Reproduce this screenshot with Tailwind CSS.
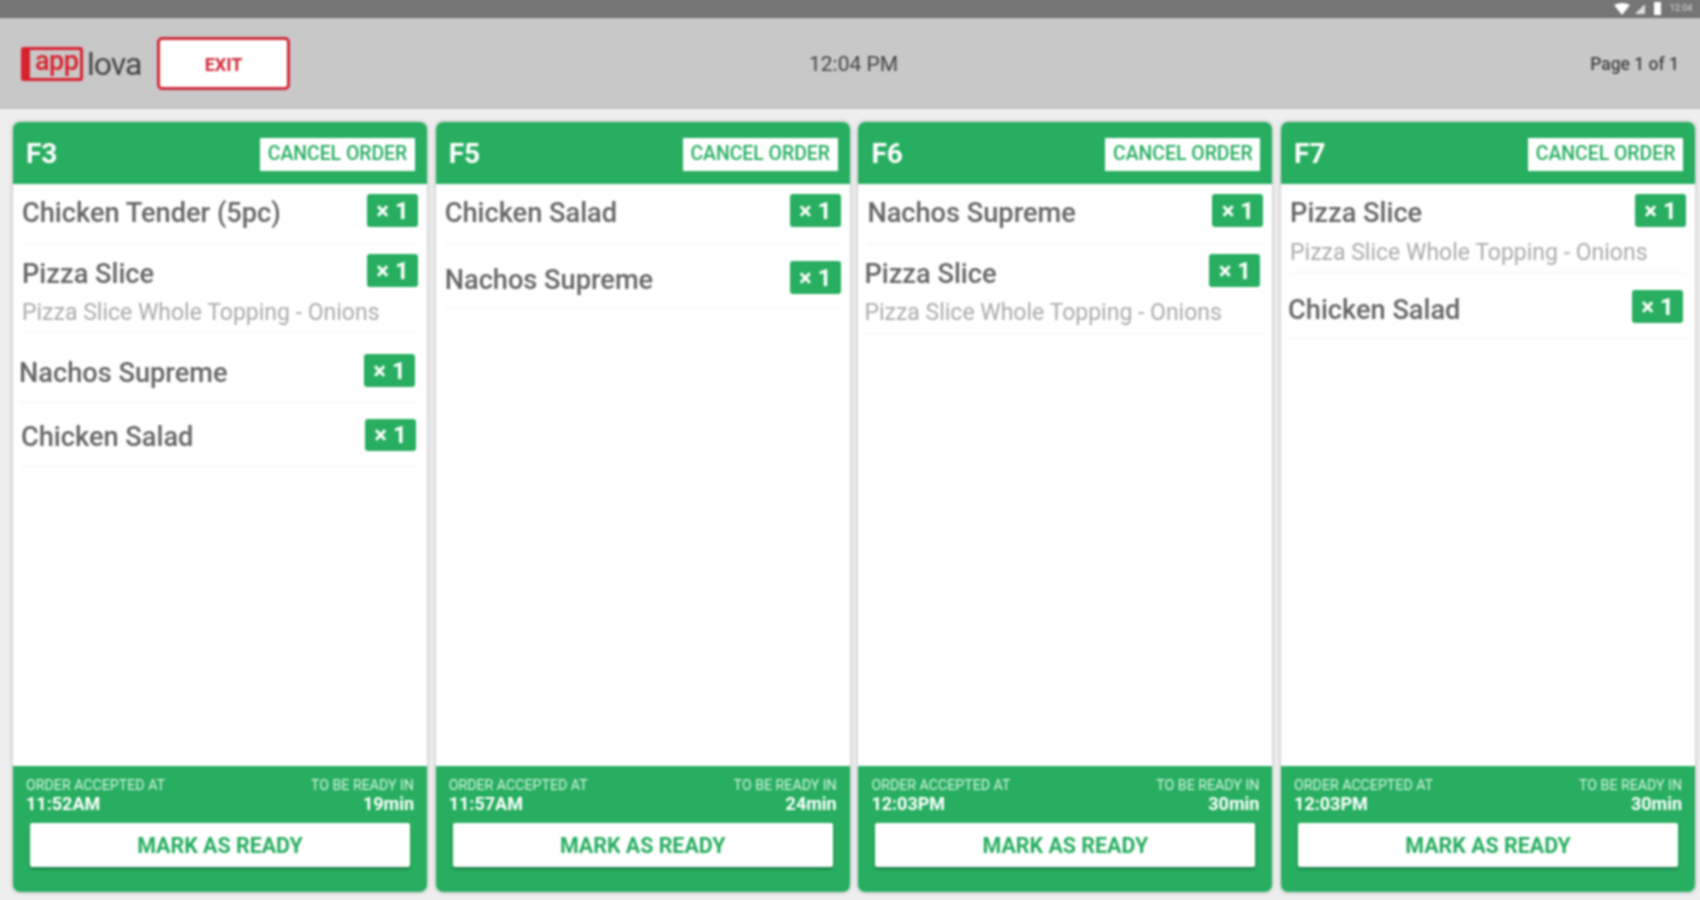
<!DOCTYPE html>
<html lang="en">
<head>
  <meta charset="UTF-8">
  <meta name="viewport" content="width=device-width, initial-scale=1.0">
  <title>Applova kitchen orders</title>
  <script src="https://cdn.jsdelivr.net/npm/@tailwindcss/browser@4"></script>
</head>
<body class="bg-[#eeeeee] h-[900px] w-[1700px] overflow-hidden font-['Roboto',sans-serif]">
<div class="h-[904px] w-[1708px] -ml-[4px] -mt-[4px] flex flex-col blur-[0.8px]">
  <!-- status bar -->
  <div class="h-[22px] pt-[4px] pr-[4px] bg-[#757575] flex items-center justify-end gap-[5px] border-b border-[#6a6a6a]">
    <svg width="16" height="12" viewBox="0 0 16 12"><path d="M0 2 Q8 -2 16 2 L8 12Z" fill="#fff"/></svg>
    <svg width="10" height="10" viewBox="0 0 10 10"><path d="M10 0V10H0Z" fill="#ddd"/></svg>
    <div class="w-[7px] h-[13px] bg-white ml-[4px]"></div>
    <span class="text-[9px] text-[#ddd] w-[30px] ml-[4px] whitespace-nowrap">12:04</span>
  </div>

  <!-- top bar -->
  <div class="h-[91px] bg-[#c9c8c8] grid grid-cols-3 items-center pl-[25px] pr-[25px]">
    <div class="flex items-center">
      <div class="w-[121px] flex items-center">
        <div class="h-[34px] w-[62px] shrink-0 border-[3px] border-[#d8232f] rounded-[3px] bg-[#c9c8c8] flex items-center relative">
          <div class="absolute left-[-2px] top-[-2px] bottom-[-2px] w-[8px] bg-[#d8232f] rounded-l-[3px]"></div>
          <span class="ml-[11px] mt-[-4px] text-[#d8232f] text-[27px] leading-none tracking-[-0.5px] font-medium">app</span>
        </div>
        <span class="ml-[4px] text-[#444] text-[32px] leading-none tracking-[-1px]">lova</span>
      </div>
      <button class="ml-[15px] w-[133px] h-[53px] pt-[1px] bg-white border-[3px] border-[#cf2b38] rounded-[5px] text-[#cf2b38] text-[18px] font-bold">EXIT</button>
    </div>
    <div class="text-center text-[21px] text-[#444] pl-[7px] pt-[2px]">12:04 PM</div>
    <div class="text-right text-[17.5px] font-medium text-[#444] pt-[2px]">Page 1 of 1</div>
  </div>

  <!-- order columns -->
  <div class="flex-1 pt-[13px] pb-[8px] pl-[17px] flex gap-[8.7px]">

    <div class="w-[414px] flex flex-col bg-white rounded-[7px] overflow-hidden shadow-[0_0_4px_rgba(0,0,0,0.25)]">
      <div class="h-[62px] pt-[2px] bg-[#27ae60] flex items-center justify-between pl-[13px] pr-[12px]">
        <span class="text-white text-[28px] font-bold">F3</span>
        <span class="w-[155px] h-[33px] bg-white text-[#27ae60] text-[19.4px] font-medium flex items-center justify-center">CANCEL ORDER</span>
      </div>
      <div class="flex-1 px-[9px]">
        <div class="h-[60px] flex justify-between pt-[10px] border-b border-[#f2f2f2]">
          <span class="text-[#666] text-[27.2px] font-medium leading-[34px] mt-[2px]">Chicken Tender (5pc)</span>
          <span class="w-[51px] h-[33px] bg-[#27ae60] rounded-[3px] text-white text-[24px] font-bold flex items-center justify-center">× 1</span>
        </div>
        <div class="h-[89px] pt-[10px] border-b border-[#f2f2f2]">
          <div class="flex justify-between">
            <span class="text-[#666] text-[27.2px] font-medium leading-[34px] mt-[3px]">Pizza Slice</span>
            <span class="w-[51px] h-[33px] bg-[#27ae60] rounded-[3px] text-white text-[24px] font-bold flex items-center justify-center">× 1</span>
          </div>
          <div class="text-[#aaa] text-[23px] leading-[30px] mt-[7px]">Pizza Slice Whole Topping - Onions</div>
        </div>
        <div class="h-[70px] flex justify-between pt-[21px] pr-[3px] -ml-[3px] border-b border-[#f2f2f2]">
          <span class="text-[#666] text-[27.2px] font-medium leading-[34px] mt-[2px]">Nachos Supreme</span>
          <span class="w-[51px] h-[33px] bg-[#27ae60] rounded-[3px] text-white text-[24px] font-bold flex items-center justify-center">× 1</span>
        </div>
        <div class="h-[64px] flex justify-between pt-[16px] pr-[2px] -ml-[1px] border-b border-[#f2f2f2]">
          <span class="text-[#666] text-[27.2px] font-medium leading-[34px] mt-[1px]">Chicken Salad</span>
          <span class="w-[51px] h-[32px] bg-[#27ae60] rounded-[3px] text-white text-[24px] font-bold flex items-center justify-center">× 1</span>
        </div>
      </div>
      <div class="h-[126px] bg-[#27ae60] px-[13px] pt-[11px]">
        <div class="flex justify-between text-[14.2px] leading-[17px] text-[#d8f3e3]"><span>ORDER ACCEPTED AT</span><span>TO BE READY IN</span></div>
        <div class="flex justify-between text-[18px] leading-[21px] font-bold text-white -mt-[1px]"><span>11:52AM</span><span>19min</span></div>
        <button class="block mt-[9px] mx-auto w-[380px] h-[44px] pt-[2px] bg-white rounded-[2px] shadow-[0_2px_3px_rgba(0,0,0,0.3)] text-[#27ae60] text-[21.4px] font-bold">MARK AS READY</button>
      </div>
    </div>

    <div class="w-[414px] flex flex-col bg-white rounded-[7px] overflow-hidden shadow-[0_0_4px_rgba(0,0,0,0.25)]">
      <div class="h-[62px] pt-[2px] bg-[#27ae60] flex items-center justify-between pl-[13px] pr-[12px]">
        <span class="text-white text-[28px] font-bold">F5</span>
        <span class="w-[155px] h-[33px] bg-white text-[#27ae60] text-[19.4px] font-medium flex items-center justify-center">CANCEL ORDER</span>
      </div>
      <div class="flex-1 px-[9px]">
        <div class="h-[60px] flex justify-between pt-[10px] border-b border-[#f2f2f2]">
          <span class="text-[#666] text-[27.2px] font-medium leading-[34px] mt-[2px]">Chicken Salad</span>
          <span class="w-[51px] h-[33px] bg-[#27ae60] rounded-[3px] text-white text-[24px] font-bold flex items-center justify-center">× 1</span>
        </div>
        <div class="h-[65px] flex justify-between pt-[17px] border-b border-[#f2f2f2]">
          <span class="text-[#666] text-[27.2px] font-medium leading-[34px] mt-[2px]">Nachos Supreme</span>
          <span class="w-[51px] h-[33px] bg-[#27ae60] rounded-[3px] text-white text-[24px] font-bold flex items-center justify-center">× 1</span>
        </div>
      </div>
      <div class="h-[126px] bg-[#27ae60] px-[13px] pt-[11px]">
        <div class="flex justify-between text-[14.2px] leading-[17px] text-[#d8f3e3]"><span>ORDER ACCEPTED AT</span><span>TO BE READY IN</span></div>
        <div class="flex justify-between text-[18px] leading-[21px] font-bold text-white -mt-[1px]"><span>11:57AM</span><span>24min</span></div>
        <button class="block mt-[9px] mx-auto w-[380px] h-[44px] pt-[2px] bg-white rounded-[2px] shadow-[0_2px_3px_rgba(0,0,0,0.3)] text-[#27ae60] text-[21.4px] font-bold">MARK AS READY</button>
      </div>
    </div>

    <div class="w-[414px] flex flex-col bg-white rounded-[7px] overflow-hidden shadow-[0_0_4px_rgba(0,0,0,0.25)]">
      <div class="h-[62px] pt-[2px] bg-[#27ae60] flex items-center justify-between pl-[13px] pr-[12px]">
        <span class="text-white text-[28px] font-bold">F6</span>
        <span class="w-[155px] h-[33px] bg-white text-[#27ae60] text-[19.4px] font-medium flex items-center justify-center">CANCEL ORDER</span>
      </div>
      <div class="flex-1 px-[9px]">
        <div class="h-[60px] flex justify-between pt-[10px] border-b border-[#f2f2f2]">
          <span class="text-[#666] text-[27.2px] font-medium leading-[34px] mt-[2px]">Nachos Supreme</span>
          <span class="w-[51px] h-[33px] bg-[#27ae60] rounded-[3px] text-white text-[24px] font-bold flex items-center justify-center">× 1</span>
        </div>
        <div class="h-[90px] pt-[10px] pr-[3px] -ml-[3px] border-b border-[#f2f2f2]">
          <div class="flex justify-between">
            <span class="text-[#666] text-[27.2px] font-medium leading-[34px] mt-[3px]">Pizza Slice</span>
            <span class="w-[51px] h-[33px] bg-[#27ae60] rounded-[3px] text-white text-[24px] font-bold flex items-center justify-center">× 1</span>
          </div>
          <div class="text-[#aaa] text-[23px] leading-[30px] mt-[7px]">Pizza Slice Whole Topping - Onions</div>
        </div>
      </div>
      <div class="h-[126px] bg-[#27ae60] px-[13px] pt-[11px]">
        <div class="flex justify-between text-[14.2px] leading-[17px] text-[#d8f3e3]"><span>ORDER ACCEPTED AT</span><span>TO BE READY IN</span></div>
        <div class="flex justify-between text-[18px] leading-[21px] font-bold text-white -mt-[1px]"><span>12:03PM</span><span>30min</span></div>
        <button class="block mt-[9px] mx-auto w-[380px] h-[44px] pt-[2px] bg-white rounded-[2px] shadow-[0_2px_3px_rgba(0,0,0,0.3)] text-[#27ae60] text-[21.4px] font-bold">MARK AS READY</button>
      </div>
    </div>

    <div class="w-[414px] flex flex-col bg-white rounded-[7px] overflow-hidden shadow-[0_0_4px_rgba(0,0,0,0.25)]">
      <div class="h-[62px] pt-[2px] bg-[#27ae60] flex items-center justify-between pl-[13px] pr-[12px]">
        <span class="text-white text-[28px] font-bold">F7</span>
        <span class="w-[155px] h-[33px] bg-white text-[#27ae60] text-[19.4px] font-medium flex items-center justify-center">CANCEL ORDER</span>
      </div>
      <div class="flex-1 px-[9px]">
        <div class="h-[89px] pt-[10px] border-b border-[#f2f2f2]">
          <div class="flex justify-between">
            <span class="text-[#666] text-[27.2px] font-medium leading-[34px] mt-[2px]">Pizza Slice</span>
            <span class="w-[51px] h-[33px] bg-[#27ae60] rounded-[3px] text-white text-[24px] font-bold flex items-center justify-center">× 1</span>
          </div>
          <div class="text-[#aaa] text-[23px] leading-[30px] mt-[8px]">Pizza Slice Whole Topping - Onions</div>
        </div>
        <div class="h-[66px] flex justify-between pt-[17px] pr-[3px] -ml-[2px] border-b border-[#f2f2f2]">
          <span class="text-[#666] text-[27.2px] font-medium leading-[34px] mt-[3px]">Chicken Salad</span>
          <span class="w-[51px] h-[33px] bg-[#27ae60] rounded-[3px] text-white text-[24px] font-bold flex items-center justify-center">× 1</span>
        </div>
      </div>
      <div class="h-[126px] bg-[#27ae60] px-[13px] pt-[11px]">
        <div class="flex justify-between text-[14.2px] leading-[17px] text-[#d8f3e3]"><span>ORDER ACCEPTED AT</span><span>TO BE READY IN</span></div>
        <div class="flex justify-between text-[18px] leading-[21px] font-bold text-white -mt-[1px]"><span>12:03PM</span><span>30min</span></div>
        <button class="block mt-[9px] mx-auto w-[380px] h-[44px] pt-[2px] bg-white rounded-[2px] shadow-[0_2px_3px_rgba(0,0,0,0.3)] text-[#27ae60] text-[21.4px] font-bold">MARK AS READY</button>
      </div>
    </div>

  </div>
</div>
</body>
</html>
